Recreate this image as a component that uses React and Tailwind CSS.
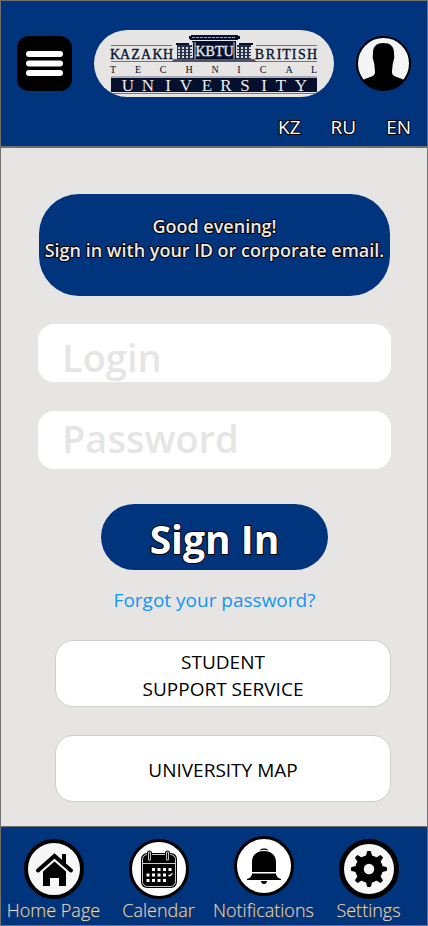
import React from "react";

const NAVY = "#04102e";

function Logo() {
  const windows = [];
  for (let row = 0; row < 4; row++) {
    for (let col = 0; col < 4; col++) {
      windows.push([84 + col * 4, 17 + row * 3]);
      windows.push([143 + col * 4, 17 + row * 3]);
    }
  }
  return (
    <svg
      viewBox="0 0 240 67"
      className="h-[67px] w-60 rounded-full bg-[#e6e5e4]"
      role="img"
      aria-label="Kazakh British Technical University"
      fontFamily="'Liberation Serif', serif"
      fill={NAVY}
    >
      <path d="M17 15.5h61M162 15.5h61M17 31.5h206M17 47h206M17 63.5h206" stroke="#70747f" strokeWidth="1" />
      <text x="21 31 41.500 52 63.500 74" y="29" fontSize="14" textAnchor="middle" stroke={NAVY} strokeWidth="0.3">KAZAKH</text>
      <text x="165.500 176.500 185 192.500 200 208 218" y="29" fontSize="14" textAnchor="middle" stroke={NAVY} strokeWidth="0.3">BRITISH</text>
      <path d="M94 9h1V6h51v3h-2v1H96V9zM97 5h47v1H97zM98 11h44v1H98zM82 13h13v2H82zM145 13h14v2h-14z" />
      <path d="M98 7.5h44" stroke="#a5a8b0" strokeDasharray="3 1" />
      <path d="M83 15h15v14H83zM142 15h15v14h-15z" opacity=".85" />
      {windows.map(([x, y]) => (
        <rect key={`${x}-${y}`} x={x} y={y} width="2" height="2" fill="#d9dadd" />
      ))}
      <path d="M98 12h45v17H98z" />
      <path d="M80 29h80l3 3H77z" fill="#4f5468" />
      <path d="M98.500 12v16M101 12v17M140 12v17M142.500 12v16" stroke="#d4d5d9" strokeWidth="1" />
      <text x="120.500" y="26" fontSize="14" textAnchor="middle" fill="#e6e5e4" stroke="#e6e5e4" strokeWidth="0.4">KBTU</text>
      <text x="19 44 69 95 121 145 169 195 220" y="43" fontSize="10" textAnchor="middle">TECHNICAL</text>
      <path d="M17 48h206v14H17z" />
      <text x="34 54 74 92 113 132 151 170 187 207" y="61" fontSize="17" textAnchor="middle" fill="#eeeeee">UNIVERSITY</text>
    </svg>
  );
}

function MenuIcon() {
  return (
    <svg viewBox="0 0 55 55" className="size-[55px]" aria-hidden="true">
      <rect width="55" height="55" rx="12" fill="#000" />
      <path d="M12 18h31M12 27.500h31M12 37h31" stroke="#fff" strokeWidth="6" strokeLinecap="round" />
    </svg>
  );
}

function AvatarIcon() {
  return (
    <svg viewBox="0 0 55 55" className="size-[55px]" aria-hidden="true">
      <circle cx="27.500" cy="27.500" r="26.500" fill="#f5f5f5" stroke="#000" strokeWidth="2" />
      <path d="M17 17c0-7 4-10 10.500-10S38 10 38 17c0 3 .6 3 0 6-.4 2-1.400 4-1.500 7-.2 3-.5 4-.5 6 0 3.500 3 4.500 6 5.500 3 1 4.500 1.500 6 3A26.500 26.500 0 0 1 7 44.500c1.500-1.500 3-2 6-3s6-2 6-5.500c0-2-.3-3-.5-6-.1-3-1.100-5-1.500-7-.6-3 0-3 0-6z" />
    </svg>
  );
}

function HomeIcon() {
  return (
    <svg viewBox="0 0 60 60" className="size-[60px]" aria-hidden="true">
      <circle cx="30" cy="30" r="28" fill="#f7f7f7" stroke="#000" strokeWidth="4" />
      <path d="M14 31.500 30.500 17 47 31.500" fill="none" stroke="#000" strokeWidth="4" strokeLinecap="round" />
      <path d="M38 15h4v11l-4-4zM19 32.500 30.500 22.500 42 32.500V47h-7v-8h-9v8h-7z" />
    </svg>
  );
}

function CalendarIcon() {
  const days = [
    [23, 29], [28.5, 29], [34, 29], [39.5, 29],
    [17.5, 34.5], [23, 34.5], [28.5, 34.5], [34, 34.5],
    [17.5, 40], [23, 40], [28.5, 40], [34, 40],
  ];
  return (
    <svg viewBox="0 0 60 60" className="size-[60px]" aria-hidden="true">
      <circle cx="30" cy="30" r="28.500" fill="#fff" stroke="#000" strokeWidth="3" />
      <rect x="12" y="14" width="36" height="35" rx="6" />
      <rect x="13.500" y="15.500" width="33" height="32" rx="5" fill="none" stroke="#fff" strokeWidth="0.8" />
      <path d="M14 24.500h32" stroke="#fff" strokeWidth="0.8" />
      <path d="M20.500 20v-6M38.500 20v-6" stroke="#000" strokeWidth="5" strokeLinecap="round" />
      <path d="M20.500 20v-6M38.500 20v-6" stroke="#fff" strokeWidth="3" strokeLinecap="round" />
      <path d="M20.500 20v-6M38.500 20v-6" stroke="#000" strokeWidth="1.500" strokeLinecap="round" />
      {days.map(([x, y]) => (
        <rect key={`${x}-${y}`} x={x} y={y} width="3" height="3" fill="#fff" />
      ))}
      <path d="m39.500 36 1 1 3-2.500" stroke="#fff" strokeWidth="1.200" fill="none" />
    </svg>
  );
}

function BellIcon() {
  return (
    <svg viewBox="0 0 60 60" className="size-[60px]" aria-hidden="true">
      <circle cx="30" cy="30" r="28.500" fill="#fff" stroke="#000" strokeWidth="3" />
      <path d="M25.500 14.500c1-1.500 2.500-2 4.500-2s3.500.5 4.500 2c-3-1-6-1-9 0zM18 36V26c0-7 5-11 12-11s12 4 12 11v10zM18 37.500h24c0 3 2 4.500 5 5.500v1H13v-1c3-1 5-2.500 5-5.500zM27 45h6c0 4-6 4-6 0z" />
    </svg>
  );
}

function SettingsIcon() {
  return (
    <svg viewBox="0 0 60 60" className="size-[60px]" aria-hidden="true">
      <circle cx="30" cy="30" r="27.500" fill="#f7f7f7" stroke="#000" strokeWidth="5" />
      {[0, 45, 90, 135, 180, 225, 270, 315].map((angle) => (
        <path key={angle} d="M28.500 12.500h3l1.500 7h-6z" stroke="#000" strokeLinejoin="round" transform={`rotate(${angle} 30 30)`} />
      ))}
      <circle cx="30" cy="30" r="9.500" fill="none" stroke="#000" strokeWidth="8.500" />
    </svg>
  );
}

const navItems = [
  { label: "Home Page", Icon: HomeIcon },
  { label: "Calendar", Icon: CalendarIcon },
  { label: "Notifications", Icon: BellIcon, raised: true },
  { label: "Settings", Icon: SettingsIcon },
];

export default function App() {
  return (
    <div className="flex min-h-screen flex-col border border-[#707070] bg-[#e6e5e3] font-['Open_Sans',sans-serif]">
      <header className="border-b-2 border-[#707070] bg-[#00347d] pt-[29px] pb-[7px]">
        <div className="flex items-center justify-between px-4">
          <button type="button" aria-label="Menu">
            <MenuIcon />
          </button>
          <Logo />
          <button type="button" aria-label="Profile">
            <AvatarIcon />
          </button>
        </div>
        <div className="mt-[18px] flex justify-end gap-[30px] pr-4 text-[19px] leading-6 font-medium text-white [-webkit-text-stroke:2px_#000] [paint-order:stroke_fill]">
          <button type="button">KZ</button>
          <button type="button">RU</button>
          <button type="button">EN</button>
        </div>
      </header>

      <main className="flex flex-1 flex-col pt-[46px] pr-9 pb-6 pl-[37px]">
        <div className="mx-px h-[102px] rounded-[40px] bg-[#00347d] pt-5 text-center text-lg leading-6 font-semibold whitespace-nowrap text-[#eceae8] [-webkit-text-stroke:2px_#000] [paint-order:stroke_fill]">
          <p>Good evening!</p>
          <p>Sign in with your ID or corporate email.</p>
        </div>

        <form className="mt-7 flex flex-col" onSubmit={(e) => e.preventDefault()}>
          <input
            type="text"
            aria-label="Login"
            placeholder="Login"
            className="h-[58px] w-full rounded-2xl bg-white px-6 pt-2 text-[38px] font-semibold outline-none placeholder:text-[#e6e5e4] placeholder:opacity-100"
          />
          <input
            type="password"
            aria-label="Password"
            placeholder="Password"
            className="mt-[29px] h-[58px] w-full rounded-2xl bg-white px-6 pb-1 text-[38px] font-semibold outline-none placeholder:text-[#e6e5e4] placeholder:opacity-100"
          />
          <button
            type="submit"
            className="mt-[35px] h-[66px] w-[227px] self-center rounded-full bg-[#00347d] pt-1 text-[39px] font-bold text-white [-webkit-text-stroke:2px_#000] [paint-order:stroke_fill]"
          >
            Sign In
          </button>
        </form>

        <a href="#forgot" className="mt-4 self-center text-[19px] leading-7 text-[#1494f5]">
          Forgot your password?
        </a>

        <div className="mt-[26px] flex flex-col gap-7 pl-[17px] text-[19px] leading-[27px] text-black">
          <button type="button" className="h-[67px] rounded-[18px] border border-[#cfcdcd] bg-white pt-1">
            STUDENT
            <br />
            SUPPORT SERVICE
          </button>
          <button type="button" className="h-[67px] rounded-[18px] border border-[#cfcdcd] bg-white pt-1">
            UNIVERSITY MAP
          </button>
        </div>
      </main>

      <nav className="border-t border-[#707070] bg-[#00347d] pr-1.5">
        <ul className="grid grid-cols-4">
          {navItems.map(({ label, Icon, raised }) => (
            <li key={label}>
              <a href="#nav" className="flex flex-col items-center">
                <span className={raised ? "pt-[9px] pb-[3px]" : "pt-3"}>
                  <Icon />
                </span>
                <span className="pb-1 text-lg leading-[22px] font-light whitespace-nowrap text-[#dddbd9] [-webkit-text-stroke:1px_#444] [paint-order:stroke_fill]">
                  {label}
                </span>
              </a>
            </li>
          ))}
        </ul>
      </nav>
    </div>
  );
}
